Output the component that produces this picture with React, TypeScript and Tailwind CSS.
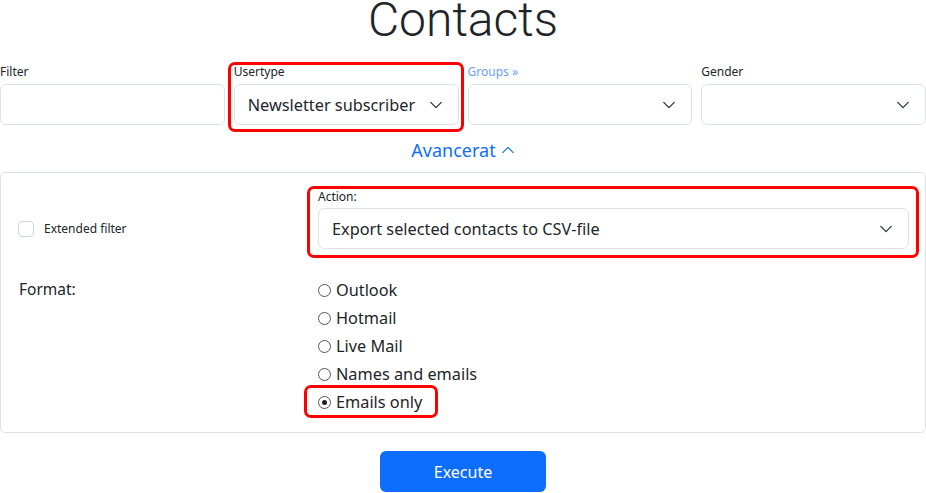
import { ReactNode } from 'react';

const Chevron = () => (
  <svg viewBox="0 0 16 16" className="w-[16px] h-[14px] text-[#343a40]" fill="none">
    <path d="M2 5l6 6 6-6" stroke="currentColor" strokeWidth="1.6" strokeLinecap="round" strokeLinejoin="round" />
  </svg>
);

const SelectBox = ({ value, className = '' }: { value?: string; className?: string }) => (
  <div
    className={`h-[41px] flex items-center justify-between pl-[13px] pr-[14px] border border-[#dee2e6] rounded-[6px] bg-white text-[16.3px] ${className}`}
  >
    <span className="pt-[1px]">{value}</span>
    <Chevron />
  </div>
);

const Highlight = ({ className }: { className: string }) => (
  <div className={`absolute border-[3px] border-[#ff0000] rounded-[7px] pointer-events-none ${className}`} />
);

const Field = ({ label, children }: { label: ReactNode; children: ReactNode }) => (
  <div className="flex flex-col">
    <div className="text-[12px] leading-[16px] mt-[1px] mb-[4px]">{label}</div>
    {children}
  </div>
);

const Radio = ({ label, checked = false }: { label: string; checked?: boolean }) => (
  <div className="h-[28px] flex items-center">
    <span className="w-[13px] h-[13px] rounded-full border border-[#555] flex items-center justify-center bg-white">
      {checked && <span className="w-[5px] h-[5px] rounded-full bg-[#222]" />}
    </span>
    <span className="ml-[5px] text-[16.3px] leading-[24px]">{label}</span>
  </div>
);

const App = () => {
  return (
    <div className="w-[926px] h-[493px] overflow-hidden bg-white text-[#212529] font-['Noto_Sans',sans-serif]">
      {/* Title */}
      <h1 className="-mt-[9px] text-center font-['Roboto',sans-serif] font-light text-[48px] leading-[58px]">
        Contacts
      </h1>

      {/* Filter row */}
      <div className="mt-[14px] grid grid-cols-4 gap-x-[9px]">
        <Field label="Filter">
          <div className="h-[41px] border border-[#dee2e6] rounded-[6px]" />
        </Field>
        <div className="relative">
          <Field label="Usertype">
            <SelectBox value="Newsletter subscriber" />
          </Field>
          <Highlight className="-left-[6px] -right-[5px] -top-[1px] -bottom-[7px]" />
        </div>
        <Field label={<span className="text-[#6c9ef8]">Groups »</span>}>
          <SelectBox />
        </Field>
        <Field label="Gender">
          <SelectBox />
        </Field>
      </div>

      {/* Advanced toggle */}
      <div className="mt-[12px] flex justify-center items-center text-[18px] leading-[26px] text-[#0d6efd]">
        <span>Avancerat</span>
        <svg viewBox="0 0 16 16" className="ml-[5px] w-[14px] h-[14px]" fill="none">
          <path d="M2 11l6-6 6 6" stroke="currentColor" strokeWidth="1.3" strokeLinecap="round" strokeLinejoin="round" />
        </svg>
      </div>

      {/* Advanced panel */}
      <div className="mt-[9px] border border-[#dee2e6] rounded-[5px] pl-[17px] pr-[16px] pt-[16px] pb-[16px]">
        <div className="flex items-end">
          <div className="w-[300px] h-[41px] flex items-center">
            <span className="w-[16px] h-[16px] rounded-[4px] border border-[#ced4da]" />
            <span className="ml-[10px] text-[12px]">Extended filter</span>
          </div>
          <div className="flex-1 relative">
            <div className="text-[12px] leading-[16px] mb-[3px]">Action:</div>
            <SelectBox value="Export selected contacts to CSV-file" />
            <Highlight className="-left-[11px] -right-[10px] -top-[3px] -bottom-[9px]" />
          </div>
        </div>

        <div className="mt-[29px] flex">
          <div className="w-[300px] text-[15.5px] leading-[24px] pl-[1px] -mt-[1px]">Format:</div>
          <div className="flex-1 -mt-[2px]">
            <Radio label="Outlook" />
            <Radio label="Hotmail" />
            <Radio label="Live Mail" />
            <Radio label="Names and emails" />
            <div className="relative w-fit">
              <Radio label="Emails only" checked />
              <Highlight className="-left-[14px] -top-[3px] -bottom-[2px] w-[134px]" />
            </div>
          </div>
        </div>
      </div>

      {/* Submit */}
      <div className="mt-[18px] flex justify-center">
        <button className="w-[166px] h-[41px] rounded-[6px] bg-[#0d6efd] text-white text-[16px]">
          Execute
        </button>
      </div>
    </div>
  );
};

export default App;
